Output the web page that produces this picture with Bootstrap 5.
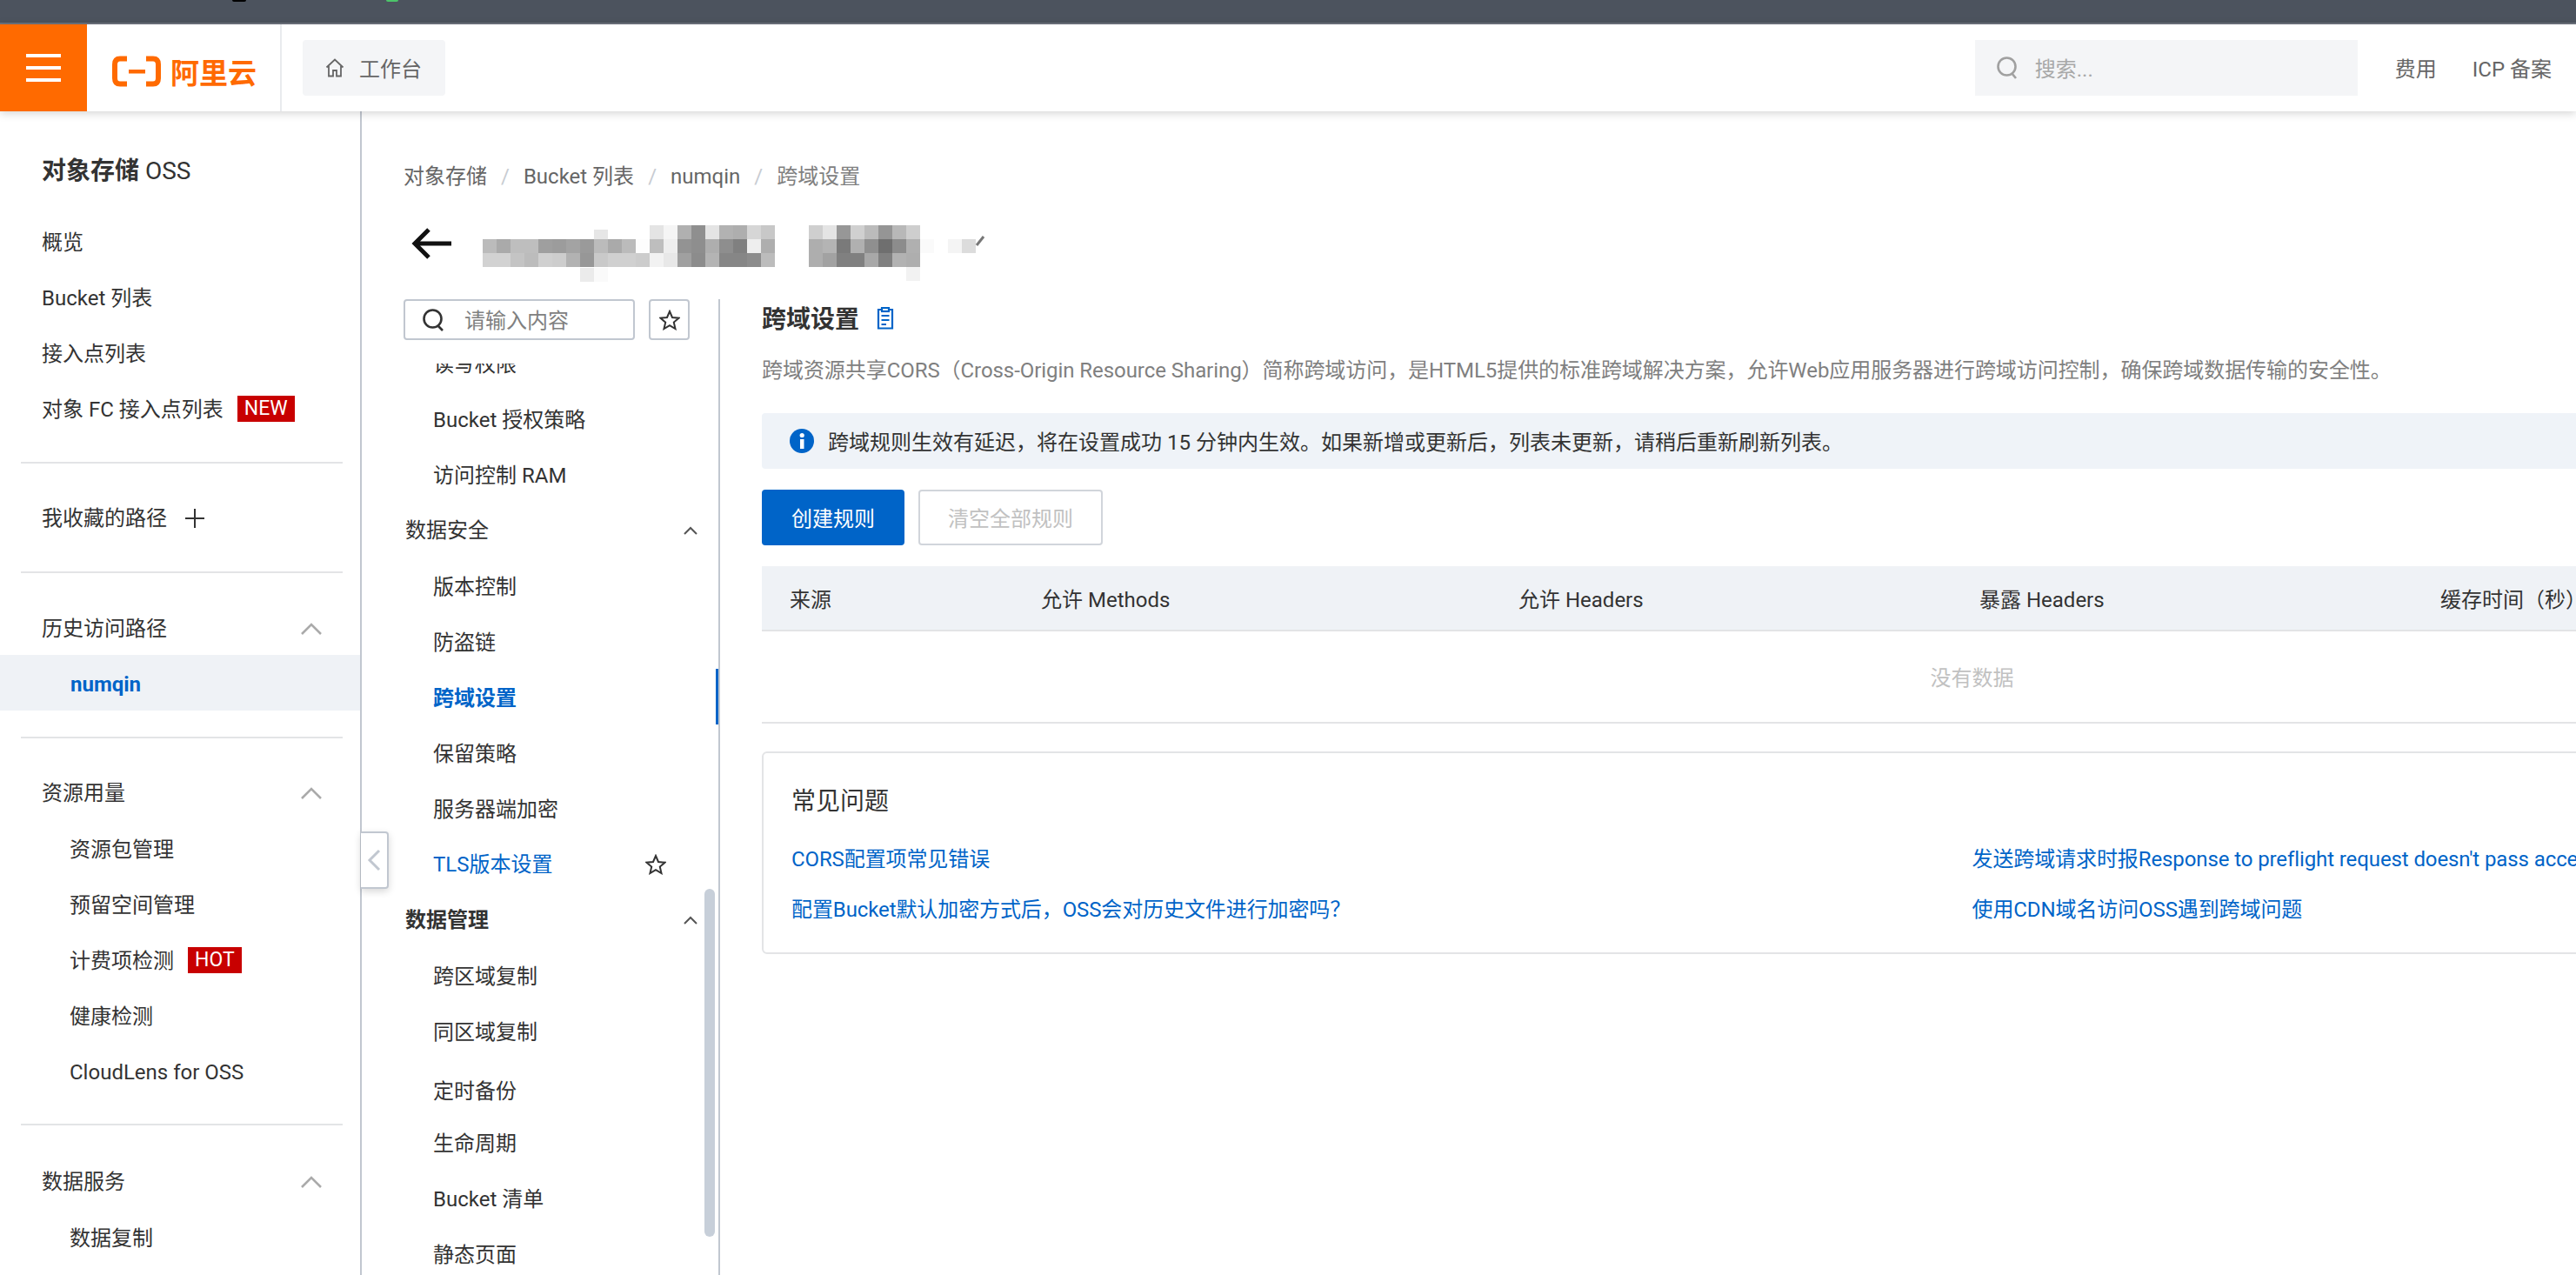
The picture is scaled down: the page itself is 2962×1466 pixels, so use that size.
<!DOCTYPE html>
<html lang="zh-CN">
<head>
<meta charset="utf-8">
<title>跨域设置</title>
<link rel="stylesheet" href="https://cdn.jsdelivr.net/npm/bootstrap@5.3.0/dist/css/bootstrap.min.css">
<style>
html,body{height:100%;margin:0;overflow:hidden}
body{font-family:Roboto,"Noto Sans CJK SC",sans-serif;font-size:24px;color:#333;background:#fff;position:relative}
a{text-decoration:none}
.chrome-bar{height:28px;background:#4c535e;border-bottom:2px solid #6c727c;position:relative}
.chrome-dot{position:absolute;top:0;height:2px;border-radius:0 0 6px 6px}
.dot-a{left:267px;width:16px;background:#000}
.dot-b{left:444px;width:14px;background:#4cc46a}
.top-bar{height:100px;background:#fff;box-shadow:0 2px 10px rgba(0,0,0,.18);position:relative;z-index:5}
.burger{width:100px;height:100px;background:#ff6a00;gap:10px}
.burger i{display:block;width:40px;height:4px;background:#fff}
.logo-cell{width:224px;height:100px;border-right:2px solid #e9ebee;padding:8px 0 0 29px;gap:11px}
.logo-word{font-family:"Noto Sans CJK SC",sans-serif;font-weight:700;font-size:33px;color:#ff6a00;line-height:36px;width:100px;white-space:nowrap}
.bench{margin-left:24px;width:164px;height:64px;background:#f4f5f7;border-radius:4px;color:#666;padding-left:26px;gap:17px}
.bench span,.top-search span,.note span,.pane-head span{padding-top:4px}
.top-search{width:440px;height:64px;background:#f4f5f7;padding-left:25px;gap:20px;color:#a8a8a8;margin-right:43px;margin-left:2px}
.top-link{color:#666;white-space:nowrap;padding-top:4px}
.top-right{padding-right:28px}
.link-gap{margin-right:41px}
.shell{height:1338px}
.side-main{width:416px;flex:none;border-right:2px solid #c1c7d0;height:100%;overflow:hidden;padding-top:35px}
.side-title{height:64px;line-height:64px;padding-left:48px;padding-top:2px;font-size:28px;font-weight:700;margin-bottom:18px}
.side-title span{font-weight:400}
.side-row{height:64px;line-height:64px;padding-left:48px;padding-right:44px;padding-top:2px;white-space:nowrap}
.side-row.sub{padding-left:80px}
.side-row.cur{background:#eff2f6;color:#0064c8;font-weight:700;padding-left:81px;height:64px}
.side-rule{height:2px;background:#e3e4e6;margin-left:24px;margin-right:20px}
.rule-a{margin-top:30px;margin-bottom:30px}
.rule-b{margin-top:30px;margin-bottom:32px}
.rule-c{margin-top:30px;margin-bottom:30px}
.rule-d{margin-top:29px;margin-bottom:32px}
.short-row{height:62px}
.plus-row{gap:21px}
.red-tag{display:inline-block;background:#c80000;color:#fff;font-size:23px;line-height:30px;height:30px;padding:0 8px;margin-left:16px;vertical-align:2px}
.fold-tab{position:absolute;left:415px;top:956px;width:32px;height:66px;background:#fff;border:2px solid #c1c7d0;border-left:0;border-radius:0 4px 4px 0;box-shadow:0 3px 8px rgba(0,0,0,.16);z-index:4}
.work{flex:1 1 auto;min-width:0;padding:53px 0 0 48px;overflow:hidden;height:100%}
.crumbs{height:40px;line-height:40px;padding-top:2px;color:#666;white-space:nowrap}
.crumbs .sep{color:#c8ccd2;margin:0 16px}
.crumbs .last{color:#808080}
.title-row{height:98px;margin-top:25px}
.arrow-svg{margin:16px 36px 0 9px;flex:none}
.mosaic{margin-top:13px;flex:none}
.mosaic rect{width:16.2px;height:16.2px}
.inner{height:1122px}
.sub-nav{width:364px;flex:none;border-right:2px solid #c1c7d0;height:100%;display:flex;flex-direction:column}
.find-row{gap:16px;height:47px;margin-bottom:27px;flex:none}
.find-box{width:266px;height:47px;border:2px solid #c1c7d0;border-radius:4px;padding-left:20px;gap:24px;color:#808080}
.find-box span{padding-top:2px}
.find-star{width:47px;height:47px;border:2px solid #c1c7d0;border-radius:4px}
.sub-list{position:relative;flex:1 1 auto;overflow:hidden;min-height:0}
.sub-scroll{margin-top:-33px}
.nav-row{height:64px;line-height:64px;padding-left:34px;padding-right:60px;padding-top:2px;white-space:nowrap;color:#333}
.nav-row.grp{padding-left:2px;padding-right:24px}
.nav-row.on{color:#0064c8;font-weight:700;position:relative}
.nav-row.on::after{content:"";position:absolute;right:0;top:0;width:3px;height:64px;background:#0064c8}
.nav-row.lnk{color:#0064c8}
.nudge-in{margin-top:4px}
.nudge-out{margin-top:-4px}
.nav-thumb{position:absolute;left:346px;top:604px;width:12px;height:400px;background:#c7cfd9;border-radius:6px}
.pane{width:2783px;flex:none;margin-left:48px}
.pane-head{height:44px;line-height:44px;font-weight:700;font-size:28px;gap:20px}
.pane-desc{height:40px;line-height:40px;margin-top:16px;padding-top:2px;color:#808080;white-space:nowrap;letter-spacing:-.06px}
.note{height:64px;margin-top:31px;background:#eff3f8;border-radius:4px;padding-left:31px;gap:15px;white-space:nowrap;color:#333}
.btn-row{margin-top:24px;gap:16px}
.go-btn,.go-btn:hover{width:164px;height:64px;background:#0064c8;border:0;color:#fff;font-size:24px;border-radius:4px;padding:4px 0 0}
.mute-btn,.mute-btn:disabled{width:212px;height:64px;background:#fff;border:2px solid #d1d5db;color:#c1c1c1;font-size:24px;border-radius:4px;padding:4px 0 0;opacity:1}
.rule-table{table-layout:fixed;width:2783px;margin:24px 0 0;--bs-table-color:#333}
.rule-table th{background:#eff2f6;height:74px;padding:4px 0 0 32px;font-weight:400;vertical-align:middle;border-bottom:2px solid #e3e4e6;white-space:nowrap;font-size:24px;color:#333}
.rule-table td{height:106px;text-align:center;vertical-align:middle;color:#c1c1c1;border-bottom:2px solid #e3e4e6;padding:4px 0 0;font-size:24px}
.w1{width:289px}.w2{width:549px}.w3{width:530px}.w4{width:530px}
.faq{margin-top:32px;height:233px;border:2px solid #e3e4e6;border-radius:6px;padding:32px;--bs-card-border-color:#e3e4e6}
.faq-title{font-size:28px;line-height:44px;height:44px;padding-top:2px}
.faq-link{height:58px;line-height:58px;padding-top:1px;color:#0064c8;white-space:nowrap;letter-spacing:-.1px}
.faq .row{--bs-gutter-x:0;margin-top:16px}
</style>
</head>
<body>
<div class="chrome-bar"><span class="chrome-dot dot-a"></span><span class="chrome-dot dot-b"></span></div>

<nav class="top-bar d-flex align-items-center">
  <div class="burger d-flex flex-column align-items-center justify-content-center"><i></i><i></i><i></i></div>
  <div class="logo-cell d-flex align-items-center">
    <svg width="56" height="36" viewBox="0 0 56 36" aria-hidden="true"><path d="M17 3.500H9Q3 3.500 3 10V26Q3 32.500 9 32.500H17M39 3.500H47Q53 3.500 53 10V26Q53 32.500 47 32.500H39" fill="none" stroke="#ff6a00" stroke-width="6"/><rect x="19" y="16" width="19" height="4.500" fill="#ff6a00"/></svg>
    <span class="logo-word">阿里云</span>
  </div>
  <div class="bench d-flex align-items-center">
    <svg width="22" height="22" viewBox="0 0 22 22" fill="none" stroke="#666" stroke-width="1.800" aria-hidden="true"><path d="M1.500 10.500L11 1.500L20.500 10.500M4 9V20.500H9V14H13V20.500H18V9"/></svg>
    <span>工作台</span>
  </div>
  <div class="ms-auto top-right d-flex align-items-center">
    <div class="top-search d-flex align-items-center">
      <svg width="24" height="26" viewBox="0 0 24 26" fill="none" stroke="#a0a0a0" stroke-width="2.600" aria-hidden="true"><circle cx="11.500" cy="11.500" r="10"/><path d="M17 19L22 25"/></svg>
      <span>搜索...</span>
    </div>
    <a class="top-link link-gap" href="#">费用</a>
    <a class="top-link" href="#">ICP 备案</a>
  </div>
</nav>

<div class="shell d-flex">
  <aside class="side-main">
    <div class="side-title">对象存储 <span>OSS</span></div>
    <div class="side-row">概览</div>
    <div class="side-row">Bucket 列表</div>
    <div class="side-row">接入点列表</div>
    <div class="side-row">对象 FC 接入点列表<span class="red-tag">NEW</span></div>
    <div class="side-rule rule-a"></div>
    <div class="side-row plus-row d-flex align-items-center">我收藏的路径
      <svg width="22" height="22" viewBox="0 0 22 22" stroke="#333" stroke-width="2" aria-hidden="true"><path d="M11 0V22M0 11H22"/></svg>
    </div>
    <div class="side-rule rule-b"></div>
    <div class="side-row short-row d-flex align-items-center justify-content-between">历史访问路径
      <svg class="chev" width="24" height="14" viewBox="0 0 24 14" fill="none" stroke="#aaa" stroke-width="2.600" aria-hidden="true"><path d="M1 13L12 2L23 13"/></svg>
    </div>
    <div class="side-row cur">numqin</div>
    <div class="side-rule rule-c"></div>
    <div class="side-row d-flex align-items-center justify-content-between">资源用量
      <svg width="24" height="14" viewBox="0 0 24 14" fill="none" stroke="#aaa" stroke-width="2.600" aria-hidden="true"><path d="M1 13L12 2L23 13"/></svg>
    </div>
    <div class="side-row sub">资源包管理</div>
    <div class="side-row sub">预留空间管理</div>
    <div class="side-row sub">计费项检测<span class="red-tag">HOT</span></div>
    <div class="side-row sub">健康检测</div>
    <div class="side-row sub">CloudLens for OSS</div>
    <div class="side-rule rule-d"></div>
    <div class="side-row d-flex align-items-center justify-content-between">数据服务
      <svg width="24" height="14" viewBox="0 0 24 14" fill="none" stroke="#aaa" stroke-width="2.600" aria-hidden="true"><path d="M1 13L12 2L23 13"/></svg>
    </div>
    <div class="side-row sub">数据复制</div>
  </aside>

  <div class="fold-tab d-flex align-items-center justify-content-center">
    <svg width="16" height="26" viewBox="0 0 16 26" fill="none" stroke="#c1c7d0" stroke-width="3" aria-hidden="true"><path d="M14 2L3 13L14 24"/></svg>
  </div>

  <main class="work">
    <nav class="crumbs"><span>对象存储</span><span class="sep">/</span><span>Bucket 列表</span><span class="sep">/</span><span>numqin</span><span class="sep">/</span><span class="last">跨域设置</span></nav>
    <div class="title-row d-flex align-items-start">
      <svg class="arrow-svg" width="46" height="36" viewBox="0 0 46 36" fill="none" stroke="#111" stroke-width="5" aria-hidden="true"><path d="M46 18H5M20 2L4 18L20 34"/></svg>
      <svg class="mosaic" width="580" height="68" viewBox="0 0 580 68" shape-rendering="crispEdges" aria-hidden="true">
        <rect x="128" y="5" fill="#e6e6e6"/><rect x="128" y="0" fill="#fff" style="height:5px"/>
        <rect x="192" y="0" fill="#e4e4e4"/><rect x="208" y="0" fill="#f5f5f5"/><rect x="224" y="0" fill="#b0b0b0"/><rect x="240" y="0" fill="#8f8f8f"/><rect x="256" y="0" fill="#e4e4e4"/><rect x="272" y="0" fill="#b2b2b2"/><rect x="288" y="0" fill="#aeaeae"/><rect x="304" y="0" fill="#d6d6d6"/><rect x="320" y="0" fill="#c8c8c8"/>
        <rect x="0" y="16" fill="#bbb"/><rect x="16" y="16" fill="#aaa"/><rect x="32" y="16" fill="#bebebe"/><rect x="48" y="16" fill="#bebebe"/><rect x="64" y="16" fill="#9f9f9f"/><rect x="80" y="16" fill="#9c9c9c"/><rect x="96" y="16" fill="#a3a3a3"/><rect x="112" y="16" fill="#9a9a9a"/><rect x="128" y="16" fill="#bbb"/><rect x="144" y="16" fill="#aaa"/><rect x="160" y="16" fill="#bbb"/><rect x="176" y="16" fill="#fdfdfd"/><rect x="192" y="16" fill="#bebebe"/><rect x="208" y="16" fill="#eee"/><rect x="224" y="16" fill="#939393"/><rect x="240" y="16" fill="#8e8e8e"/><rect x="256" y="16" fill="#aeaeae"/><rect x="272" y="16" fill="#8e8e8e"/><rect x="288" y="16" fill="#808080"/><rect x="304" y="16" fill="#eee"/><rect x="320" y="16" fill="#aeaeae"/>
        <rect x="0" y="32" fill="#d2d2d2"/><rect x="16" y="32" fill="#d2d2d2"/><rect x="32" y="32" fill="#c4c4c4"/><rect x="48" y="32" fill="#bcbcbc"/><rect x="64" y="32" fill="#d0d0d0"/><rect x="80" y="32" fill="#cdcdcd"/><rect x="96" y="32" fill="#b2b2b2"/><rect x="112" y="32" fill="#979797"/><rect x="128" y="32" fill="#c9c9c9"/><rect x="144" y="32" fill="#d0d0d0"/><rect x="160" y="32" fill="#d0d0d0"/><rect x="176" y="32" fill="#ccc"/><rect x="192" y="32" fill="#f2f2f2"/><rect x="208" y="32" fill="#e8e8e8"/><rect x="224" y="32" fill="#a0a0a0"/><rect x="240" y="32" fill="#8c8c8c"/><rect x="256" y="32" fill="#b4b4b4"/><rect x="272" y="32" fill="#868686"/><rect x="288" y="32" fill="#868686"/><rect x="304" y="32" fill="#8c8c8c"/><rect x="320" y="32" fill="#bcbcbc"/>
        <rect x="112" y="49" fill="#ebebeb"/><rect x="128" y="49" fill="#fafafa"/>
        <rect x="375" y="0" fill="#cfcfcf"/><rect x="391" y="0" fill="#e4e4e4"/><rect x="407" y="0" fill="#979797"/><rect x="423" y="0" fill="#d0d0d0"/><rect x="439" y="0" fill="#bbb"/><rect x="455" y="0" fill="#959595"/><rect x="471" y="0" fill="#b8b8b8"/><rect x="487" y="0" fill="#cecece"/>
        <rect x="375" y="16" fill="#aeaeae"/><rect x="391" y="16" fill="#b4b4b4"/><rect x="407" y="16" fill="#7a7a7a"/><rect x="423" y="16" fill="#b0b0b0"/><rect x="439" y="16" fill="#8f8f8f"/><rect x="455" y="16" fill="#6f6f6f"/><rect x="471" y="16" fill="#8c8c8c"/><rect x="487" y="16" fill="#b0b0b0"/><rect x="503" y="16" fill="#fafafa"/><rect x="535" y="16" fill="#f4f4f4"/><rect x="551" y="16" fill="#dcdcdc"/>
        <rect x="375" y="32" fill="#aeaeae"/><rect x="391" y="32" fill="#a2a2a2"/><rect x="407" y="32" fill="#808080"/><rect x="423" y="32" fill="#808080"/><rect x="439" y="32" fill="#a8a8a8"/><rect x="455" y="32" fill="#808080"/><rect x="471" y="32" fill="#b2b2b2"/><rect x="487" y="32" fill="#aeaeae"/>
        <rect x="487" y="48" fill="#f2f2f2"/>
        <path d="M568 23L576 13" stroke="#777" stroke-width="3" shape-rendering="auto"/>
      </svg>
    </div>

    <div class="inner d-flex">
      <div class="sub-nav">
        <div class="find-row d-flex">
          <div class="find-box d-flex align-items-center">
            <svg width="24" height="26" viewBox="0 0 24 26" fill="none" stroke="#333" stroke-width="2.600" aria-hidden="true"><circle cx="11.500" cy="11.500" r="10"/><path d="M17 19L23 25"/></svg>
            <span>请输入内容</span>
          </div>
          <div class="find-star d-flex align-items-center justify-content-center">
            <svg width="24" height="24" viewBox="0 0 24 24" fill="none" stroke="#333" stroke-width="2" aria-hidden="true"><path d="M12 2L15 9L22.500 9.700L16.800 14.600L18.500 22L12 18.100L5.500 22L7.200 14.600L1.500 9.700L9 9Z"/></svg>
          </div>
        </div>
        <div class="sub-list">
          <div class="sub-scroll">
            <div class="nav-row">读写权限</div>
            <div class="nav-row">Bucket 授权策略</div>
            <div class="nav-row">访问控制 RAM</div>
            <div class="nav-row grp d-flex align-items-center justify-content-between">数据安全
              <svg width="16" height="10" viewBox="0 0 16 10" fill="none" stroke="#555" stroke-width="2" aria-hidden="true"><path d="M1 9L8 2L15 9"/></svg>
            </div>
            <div class="nav-row">版本控制</div>
            <div class="nav-row">防盗链</div>
            <div class="nav-row on">跨域设置</div>
            <div class="nav-row">保留策略</div>
            <div class="nav-row">服务器端加密</div>
            <div class="nav-row lnk d-flex align-items-center justify-content-between">TLS版本设置
              <svg width="24" height="24" viewBox="0 0 24 24" fill="none" stroke="#333" stroke-width="2" aria-hidden="true"><path d="M12 2L15 9L22.500 9.700L16.800 14.600L18.500 22L12 18.100L5.500 22L7.200 14.600L1.500 9.700L9 9Z"/></svg>
            </div>
            <div class="nav-row grp fw-bold d-flex align-items-center justify-content-between">数据管理
              <svg width="16" height="10" viewBox="0 0 16 10" fill="none" stroke="#555" stroke-width="2" aria-hidden="true"><path d="M1 9L8 2L15 9"/></svg>
            </div>
            <div class="nav-row">跨区域复制</div>
            <div class="nav-row">同区域复制</div>
            <div class="nav-row nudge-in">定时备份</div>
            <div class="nav-row nudge-out">生命周期</div>
            <div class="nav-row">Bucket 清单</div>
            <div class="nav-row">静态页面</div>
          </div>
          <div class="nav-thumb"></div>
        </div>
      </div>

      <section class="pane">
        <div class="pane-head d-flex align-items-center">
          <span>跨域设置</span>
          <svg width="20" height="26" viewBox="0 0 20 26" fill="none" stroke="#0064c8" stroke-width="2.200" aria-hidden="true"><path d="M6 3H2V24.500H18V3H14"/><rect x="6" y="1" width="8" height="4"/><path d="M5.500 10H14.500M5.500 15H14.500M5.500 20H11"/></svg>
        </div>
        <div class="pane-desc">跨域资源共享CORS（Cross-Origin Resource Sharing）简称跨域访问，是HTML5提供的标准跨域解决方案，允许Web应用服务器进行跨域访问控制，确保跨域数据传输的安全性。</div>
        <div class="note d-flex align-items-center">
          <svg width="30" height="30" viewBox="0 0 30 30" aria-hidden="true"><circle cx="15" cy="15" r="14" fill="#0064c8"/><rect x="13" y="13" width="4.500" height="11" fill="#fff"/><circle cx="15.200" cy="8.500" r="2.600" fill="#fff"/></svg>
          <span>跨域规则生效有延迟，将在设置成功 15 分钟内生效。如果新增或更新后，列表未更新，请稍后重新刷新列表。</span>
        </div>
        <div class="btn-row d-flex">
          <button class="btn go-btn" type="button">创建规则</button>
          <button class="btn mute-btn" type="button" disabled>清空全部规则</button>
        </div>
        <table class="table rule-table">
          <thead><tr>
            <th class="w1">来源</th><th class="w2">允许 Methods</th><th class="w3">允许 Headers</th><th class="w4">暴露 Headers</th><th>缓存时间（秒）</th>
          </tr></thead>
          <tbody><tr><td colspan="5">没有数据</td></tr></tbody>
        </table>
        <div class="card faq">
          <div class="faq-title">常见问题</div>
          <div class="row">
            <div class="col-6">
              <div class="faq-link">CORS配置项常见错误</div>
              <div class="faq-link">配置Bucket默认加密方式后，OSS会对历史文件进行加密吗？</div>
            </div>
            <div class="col-6">
              <div class="faq-link">发送跨域请求时报Response to preflight request doesn't pass access control check</div>
              <div class="faq-link">使用CDN域名访问OSS遇到跨域问题</div>
            </div>
          </div>
        </div>
      </section>
    </div>
  </main>
</div>
<script src="https://cdn.jsdelivr.net/npm/bootstrap@5.3.0/dist/js/bootstrap.bundle.min.js"></script>
</body>
</html>
